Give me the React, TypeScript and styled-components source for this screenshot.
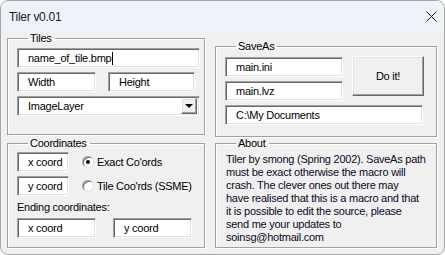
import React from 'react';
import styled, { createGlobalStyle } from 'styled-components';

const GlobalStyle = createGlobalStyle`
    html, body {
        margin: 0;
        padding: 0;
        background: #ffffff;
    }
    body {
        font-family: 'Liberation Sans', Arial, sans-serif;
        font-size: 11px;
        letter-spacing: -0.25px;
        color: #000000;
    }
`;

const Window = styled.div`
    width: 445px;
    height: 255px;
    box-sizing: border-box;
    border: 1px solid #a6a6a6;
    border-radius: 8px;
    overflow: hidden;
    background: #f0f0f0;
    display: flex;
    flex-direction: column;
`;

const TitleBar = styled.div`
    height: 31px;
    flex-shrink: 0;
    background: #eef2f9;
    display: flex;
    align-items: center;
    justify-content: space-between;
    padding: 0 7px 0 8px;
`;

const Title = styled.span`
    font-size: 12px;
    letter-spacing: -0.3px;
    color: #1a1a1a;
`;

const Body = styled.div`
    display: grid;
    grid-template-columns: 198px 222px;
    column-gap: 10px;
    padding-left: 6px;
`;

const Column = styled.div<{ $offset?: number }>`
    display: flex;
    flex-direction: column;
    padding-top: ${({ $offset }) => $offset ?? 0}px;
`;

const Group = styled.fieldset<{ $height: number; $pad: number; $mt?: number }>`
    margin: ${({ $mt }) => $mt ?? 0}px 0 0 0;
    min-width: 0;
    height: ${({ $height }) => $height}px;
    box-sizing: border-box;
    border: 1px solid #a0a0a0;
    box-shadow: inset 1px 1px #ffffff, 1px 1px #ffffff;
    padding: ${({ $pad }) => $pad}px 9px 0 9px;
`;

const Legend = styled.legend`
    margin-left: 11px;
    padding: 0 3px 0 2px;
    line-height: 12px;
    font-size: 11px;
`;

const Stack = styled.div<{ $gap: number }>`
    display: flex;
    flex-direction: column;
    gap: ${({ $gap }) => $gap}px;
`;

const Row = styled.div<{ $gap?: number }>`
    display: flex;
    align-items: center;
    justify-content: ${({ $gap }) => ($gap ? 'flex-start' : 'space-between')};
    gap: ${({ $gap }) => $gap ?? 0}px;
`;

const Field = styled.div<{ $w: number }>`
    width: ${({ $w }) => $w}px;
    height: 20px;
    box-sizing: border-box;
    flex-shrink: 0;
    background: #ffffff;
    border: 1px solid;
    border-color: #a0a0a0 #ffffff #ffffff #a0a0a0;
    box-shadow: inset 1px 1px #696969, inset -1px -1px #e3e3e3;
    padding-left: 10px;
    display: flex;
    align-items: center;
    white-space: nowrap;
`;

const Caret = styled.span`
    display: inline-block;
    width: 1px;
    height: 13px;
    margin-left: 1px;
    background: #000000;
`;

const Combo = styled(Field)`
    justify-content: space-between;
    padding-right: 2px;
`;

const DropButton = styled.div`
    width: 16px;
    height: 16px;
    box-sizing: border-box;
    background: #f0f0f0;
    border: 1px solid;
    border-color: #ffffff #696969 #696969 #ffffff;
    box-shadow: inset -1px -1px #a0a0a0, inset 1px 1px #e3e3e3;
    display: flex;
    align-items: center;
    justify-content: center;
`;

const Arrow = styled.span`
    width: 0;
    height: 0;
    border-left: 4px solid transparent;
    border-right: 4px solid transparent;
    border-top: 4px solid #000000;
`;

const SaveGrid = styled.div`
    display: grid;
    grid-template-columns: 118px 72px;
    grid-template-rows: 20px 20px 20px;
    column-gap: 9px;
    row-gap: 4px;
`;

const PathField = styled(Field)`
    grid-column: 1 / span 2;
    width: 198px;
`;

const PushButton = styled.button`
    grid-row: 1 / span 2;
    grid-column: 2;
    height: 40px;
    margin-top: -1px;
    box-sizing: border-box;
    background: #f0f0f0;
    border: 1px solid;
    border-color: #ffffff #696969 #696969 #ffffff;
    box-shadow: inset -1px -1px #a0a0a0, inset 1px 1px #e3e3e3;
    font-family: inherit;
    font-size: 11px;
    letter-spacing: inherit;
    color: #000000;
    padding: 0;
`;

const RadioRow = styled.label`
    display: flex;
    align-items: center;
    margin-left: 13px;
    gap: 3px;
    flex: 1;
    white-space: nowrap;
`;

const RadioCircle = styled.span<{ $checked?: boolean }>`
    width: 12px;
    height: 12px;
    flex-shrink: 0;
    box-sizing: border-box;
    border-radius: 50%;
    background: #ffffff;
    border: 1px solid;
    border-color: #a0a0a0 #e3e3e3 #e3e3e3 #a0a0a0;
    box-shadow: inset 1px 1px #696969;
    display: flex;
    align-items: center;
    justify-content: center;
    &::after {
        content: '';
        width: 4px;
        height: 4px;
        border-radius: 50%;
        background: ${({ $checked }) => ($checked ? '#000000' : 'transparent')};
    }
`;

const Caption = styled.div`
    line-height: 13px;
    margin-top: 1px;
`;

const AboutText = styled.p`
    margin: 0;
    padding-left: 1px;
    line-height: 13px;
    white-space: nowrap;
    color: #0a0a28;
`;

const aboutLines = [
    'Tiler by smong (Spring 2002). SaveAs path',
    'must be exact otherwise the macro will',
    'crash. The clever ones out there may',
    'have realised that this is a macro and that',
    'it is possible to edit the source, please',
    'send me your updates to',
    'soinsg@hotmail.com',
];

const CloseIcon = () => (
    <svg width="11" height="11" viewBox="0 0 11 11">
        <path d="M0.5 0.5L10.5 10.5M10.5 0.5L0.5 10.5" stroke="#1a1a1a" strokeWidth="1" />
    </svg>
);

const App: React.FC = () => {
    return (
        <>
            <GlobalStyle />
            <Window>
                <TitleBar>
                    <Title>Tiler v0.01</Title>
                    <CloseIcon />
                </TitleBar>
                <Body>
                    <Column>
                        <Group $height={103} $pad={4}>
                            <Legend>Tiles</Legend>
                            <Stack $gap={4}>
                                <Field $w={183}>
                                    name_of_tile.bmp
                                    <Caret />
                                </Field>
                                <Row>
                                    <Field $w={79}>Width</Field>
                                    <Field $w={87}>Height</Field>
                                </Row>
                                <Combo $w={183}>
                                    ImageLayer
                                    <DropButton>
                                        <Arrow />
                                    </DropButton>
                                </Combo>
                            </Stack>
                        </Group>
                        <Group $height={111} $pad={3} $mt={2}>
                            <Legend>Coordinates</Legend>
                            <Stack $gap={4}>
                                <Row>
                                    <Field $w={52}>x coord</Field>
                                    <RadioRow>
                                        <RadioCircle $checked />
                                        Exact Co'ords
                                    </RadioRow>
                                </Row>
                                <Row>
                                    <Field $w={52}>y coord</Field>
                                    <RadioRow>
                                        <RadioCircle />
                                        Tile Coo'rds (SSME)
                                    </RadioRow>
                                </Row>
                                <Caption>Ending coordinates:</Caption>
                                <Row $gap={17}>
                                    <Field $w={79}>x coord</Field>
                                    <Field $w={79}>y coord</Field>
                                </Row>
                            </Stack>
                        </Group>
                    </Column>
                    <Column $offset={8}>
                        <Group $height={97} $pad={5}>
                            <Legend>SaveAs</Legend>
                            <SaveGrid>
                                <Field $w={118}>main.ini</Field>
                                <PushButton>Do it!</PushButton>
                                <Field $w={118}>main.lvz</Field>
                                <PathField $w={198}>C:\My Documents</PathField>
                            </SaveGrid>
                        </Group>
                        <Group $height={111} $pad={4}>
                            <Legend>About</Legend>
                            <AboutText>
                                {aboutLines.map((line, i) => (
                                    <React.Fragment key={i}>
                                        {line}
                                        {i < aboutLines.length - 1 && <br />}
                                    </React.Fragment>
                                ))}
                            </AboutText>
                        </Group>
                    </Column>
                </Body>
            </Window>
        </>
    );
};

export default App;
